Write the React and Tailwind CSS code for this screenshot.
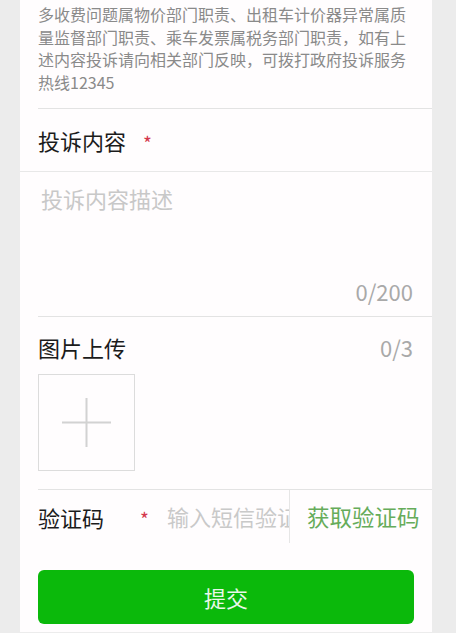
// Complaint form — bottom half of the taxi complaint page (scrolled view).

const FONT = "font-['Noto_Sans_CJK_SC','Noto_Sans',sans-serif]";

const NOTICE = [
  '多收费问题属物价部门职责、出租车计价器异常属质',
  '量监督部门职责、乘车发票属税务部门职责，如有上',
  '述内容投诉请向相关部门反映，可拨打政府投诉服务',
  '热线12345',
];

function Divider({ inset = true }) {
  return <div className={`${inset ? 'ml-[18px]' : ''} h-px bg-[#e3e3e3]`} />;
}

function Required() {
  return <span className="text-[19px] leading-none text-[#d4384c] mt-[4px]">*</span>;
}

export default function App() {
  return (
    <div className={`h-[633px] overflow-hidden bg-[#ececec] ${FONT}`}>
      <div className="ml-[20px] w-[412px] h-[632px] bg-[#fffdfe] flex flex-col">
        {/* notice text */}
        <div className="pl-[18px] pt-[3px] pb-[15px] text-[16px] leading-[22.5px] text-[#8a8a8a]">
          {NOTICE.map(line => (
            <div key={line} className="whitespace-nowrap">{line}</div>
          ))}
        </div>
        <Divider />

        {/* 投诉内容 */}
        <div className="h-[62px] flex items-center pl-[18px] gap-[17px]">
          <span className="text-[22px] leading-none text-[#1b1b1b]">投诉内容</span>
          <Required />
        </div>
        <div className="h-px bg-[#e8e8e8]" />

        <div className="h-[144px] flex flex-col justify-between pl-[21px] pr-[19px] pt-[11px] pb-[10px]">
          <span className="text-[22px] leading-[30px] text-[#c8c8c8]">投诉内容描述</span>
          <span className="self-end text-[22px] leading-[30px] text-[#a9a9a9]">0/200</span>
        </div>
        <Divider />

        {/* 图片上传 */}
        <div className="pl-[18px] pr-[19px] pt-[15px] pb-[18px]">
          <div className="flex items-center justify-between">
            <span className="text-[22px] leading-[30px] text-[#1b1b1b]">图片上传</span>
            <span className="text-[22px] leading-[30px] text-[#a9a9a9]">0/3</span>
          </div>
          <div className="mt-[12px] w-[97px] h-[97px] border border-[#dcdcdc] flex items-center justify-center">
            <svg width="49" height="49" viewBox="0 0 49 49">
              <path d="M0 24.5H49M24.5 0V49" stroke="#d2d2d2" strokeWidth="2" />
            </svg>
          </div>
        </div>
        <Divider />

        {/* 验证码 */}
        <div className="h-[53px] flex items-stretch">
          <div className="flex items-center pl-[18px]">
            <span className="w-[102px] text-[22px] leading-none text-[#1b1b1b]">验证码</span>
            <Required />
          </div>
          <input
            className="ml-[18px] w-[122px] bg-transparent text-[22px] outline-none placeholder:text-[#c9c9c9]"
            placeholder="输入短信验证码"
          />
          <div className="w-px bg-[#e6e6e6]" />
          <button className="pl-[17px] pr-[12px] text-[22.5px] leading-none text-[#66ac5a] whitespace-nowrap">
            获取验证码
          </button>
        </div>

        {/* submit */}
        <div className="px-[18px] pt-[27px]">
          <button className="w-full h-[54px] rounded-[6px] bg-[#0bb90b] text-[22px] text-[#eaf8ea]">
            提交
          </button>
        </div>
      </div>
    </div>
  );
}
